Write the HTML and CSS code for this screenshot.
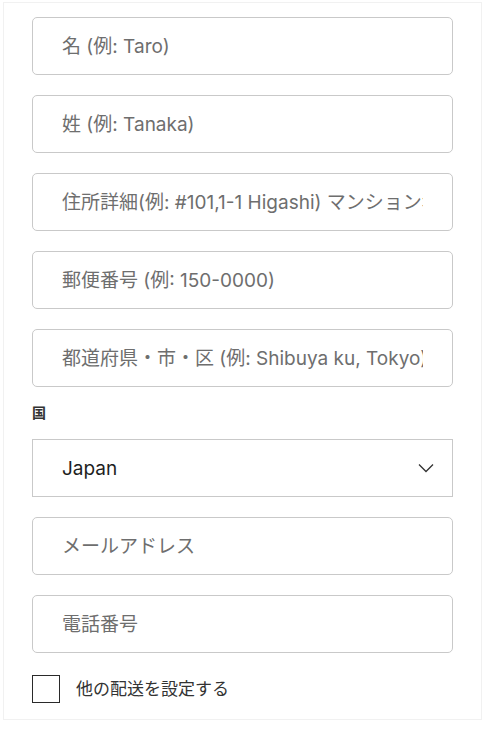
FILE: index.html
```html
<!DOCTYPE html>
<html lang="ja">
<head>
<meta charset="utf-8">
<title>配送先</title>
<link rel="stylesheet" href="styles.css">
</head>
<body>
<form class="card">
  <input class="field" type="text" placeholder="名 (例: Taro)">
  <input class="field" type="text" placeholder="姓 (例: Tanaka)">
  <input class="field" type="text" placeholder="住所詳細(例: #101,1-1 Higashi) マンション名">
  <input class="field" type="text" placeholder="郵便番号 (例: 150-0000)">
  <input class="field" type="text" placeholder="都道府県・市・区 (例: Shibuya ku, Tokyo)">
  <label class="label" for="country">国</label>
  <div class="select-wrap">
    <select id="country" class="select">
      <option>Japan</option>
    </select>
    <svg class="chevron" width="16" height="10" viewBox="0 0 16 10" aria-hidden="true">
      <path d="M1 1.5 L8 8.5 L15 1.5" fill="none" stroke="#333" stroke-width="1.3"/>
    </svg>
  </div>
  <input class="field" type="email" placeholder="メールアドレス">
  <input class="field" type="tel" placeholder="電話番号">
  <label class="check">
    <input class="box" type="checkbox">
    <span class="check-text">他の配送を設定する</span>
  </label>
</form>
</body>
</html>
```
FILE: styles.css
```css
html, body {
  margin: 0;
  padding: 0;
  background: #ffffff;
}

body {
  font-family: Inter, "Noto Sans CJK JP", sans-serif;
  color: #222;
}

.card {
  box-sizing: border-box;
  width: 479px;
  margin: 2px 0 0 3px;
  border: 1px solid #f1f1f1;
  background: #fff;
  padding: 14px 28px 16px 28px;
  display: flex;
  flex-direction: column;
  gap: 20px;
}

.field {
  box-sizing: border-box;
  width: 100%;
  height: 58px;
  margin: 0;
  border: 1px solid #c9c9c9;
  border-radius: 5px;
  padding: 0 29px;
  font-family: inherit;
  font-size: 19px;
  color: #222;
  background: #fff;
  outline: none;
}

.field::placeholder {
  color: #6e6e6e;
  opacity: 1;
}

.label {
  display: block;
  margin: -4px 0 -4px 0;
  font-size: 14px;
  font-weight: 700;
  line-height: 20px;
  color: #333;
}

.select-wrap {
  position: relative;
  height: 58px;
}

.select {
  box-sizing: border-box;
  width: 100%;
  height: 58px;
  margin: 0;
  border: 1px solid #c9c9c9;
  border-radius: 0;
  padding: 0 29px;
  appearance: none;
  -webkit-appearance: none;
  background: #fff;
  font-family: inherit;
  font-size: 19px;
  color: #1e1e1e;
  outline: none;
}

.chevron {
  position: absolute;
  right: 19px;
  top: 24px;
  pointer-events: none;
}

.check {
  display: flex;
  align-items: center;
  gap: 16px;
  margin-top: 2px;
}

.box {
  appearance: none;
  -webkit-appearance: none;
  box-sizing: border-box;
  width: 28px;
  height: 28px;
  margin: 0;
  border: 1.5px solid #2a2a2a;
  border-radius: 0;
  background: #fff;
}

.check-text {
  font-size: 17px;
  color: #333;
  line-height: 28px;
}
```
